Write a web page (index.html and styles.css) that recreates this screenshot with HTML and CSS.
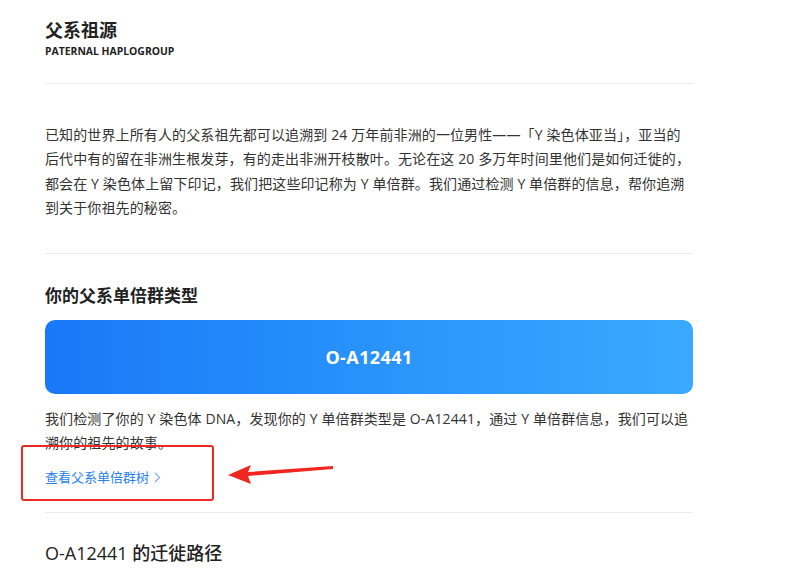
FILE: index.html
```html
<!DOCTYPE html>
<html lang="zh-CN">
<head>
<meta charset="utf-8">
<title>父系祖源</title>
<link rel="stylesheet" href="styles.css">
</head>
<body>
<main class="page">
  <header class="head">
    <h1 class="title">父系祖源</h1>
    <div class="subtitle">PATERNAL HAPLOGROUP</div>
  </header>
  <section class="intro">
    <p class="text">已知的世界上所有人的父系祖先都可以追溯到 24 万年前非洲的一位男性——「Y 染色体亚当」，亚当的后代中有的留在非洲生根发芽，有的走出非洲开枝散叶。无论在这 20 多万年时间里他们是如何迁徙的，都会在 Y 染色体上留下印记，我们把这些印记称为 Y 单倍群。我们通过检测 Y 单倍群的信息，帮你追溯到关于你祖先的秘密。</p>
  </section>
  <section class="type">
    <h2 class="h2">你的父系单倍群类型</h2>
    <div class="card">O-A12441</div>
    <p class="text">我们检测了你的 Y 染色体 DNA，发现你的 Y 单倍群类型是 O-A12441，通过 Y 单倍群信息，我们可以追溯你的祖先的故事。</p>
    <a class="link" href="#">查看父系单倍群树 <svg class="chev" width="7" height="11" viewBox="0 0 7 11"><path d="M1 1l4.5 4.5L1 10" fill="none" stroke="currentColor" stroke-width="1.1"/></svg></a>
  </section>
  <section class="route">
    <h2 class="h2 h2-route">O-A12441 的迁徙路径</h2>
  </section>
  <div class="mark"></div>
  <svg class="arrow" width="120" height="24" viewBox="0 0 120 24">
    <path d="M2 15 L25 5 L22 12 L107 6 L107 9 L22 16 L25 24 Z" fill="#f0261f"/>
  </svg>
</main>
</body>
</html>
```
FILE: styles.css
```css
* { box-sizing: border-box; }
html, body { margin: 0; padding: 0; background: #fff; }
body {
  font-family: "Open Sans", "Noto Sans CJK SC", sans-serif;
  color: #333;
}
.page {
  position: relative;
  width: 648px;
  margin-left: 45px;
  padding-top: 18px;
}
.head {
  padding-bottom: 24px;
  border-bottom: 1px solid #ebebeb;
}
.title {
  margin: 0;
  font-size: 18px;
  line-height: 24px;
  font-weight: 700;
  color: #222;
}
.subtitle {
  margin-top: 1px;
  font-size: 10.4px;
  line-height: 16px;
  font-weight: 700;
  color: #222;
}
.intro {
  padding: 39px 0 33px;
  border-bottom: 1px solid #ebebeb;
}
.text {
  margin: 0;
  font-size: 14px;
  line-height: 24.3px;
  color: #333;
  letter-spacing: 0.12px;
}
.type {
  padding: 30px 0 25px;
  border-bottom: 1px solid #ebebeb;
}
.h2 {
  margin: 0;
  font-size: 17px;
  line-height: 24px;
  font-weight: 700;
  color: #222;
}
.card {
  margin: 12px 0 13px;
  height: 74px;
  border-radius: 10px;
  background: linear-gradient(90deg, #1878f7 0%, #2a95fb 55%, #3aa9ff 100%);
  color: #fff;
  font-size: 18px;
  font-weight: 700;
  display: flex;
  align-items: center;
  justify-content: center;
  letter-spacing: 0.4px;
}
.link {
  display: inline-flex;
  align-items: center;
  gap: 5px;
  margin-top: 11px;
  font-size: 13px;
  line-height: 20px;
  color: #2a7ff2;
  text-decoration: none;
}
.chev { color: #7aa9e8; margin-top: 1px; }
.route { padding-top: 28px; }
.h2-route { font-weight: 500; font-size: 18px; }
.mark {
  position: absolute;
  left: -24px;
  top: 445px;
  width: 193px;
  height: 56px;
  border: 2px solid #ec2a24;
  border-radius: 3px;
}
.arrow {
  position: absolute;
  left: 181px;
  top: 460px;
}
```
